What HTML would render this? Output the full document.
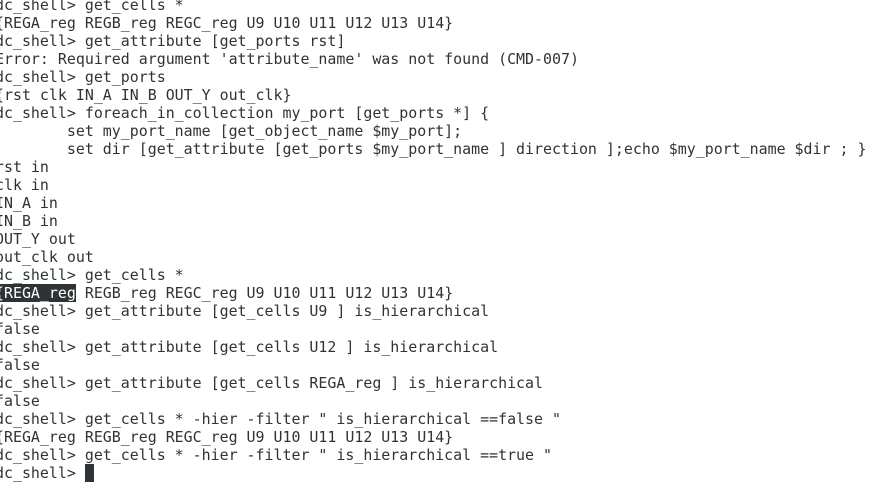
<!DOCTYPE html>
<html><head><style>
html,body{margin:0;padding:0;background:#fff;width:877px;height:476px;overflow:hidden}
pre{position:absolute;left:-5px;top:-4px;margin:0;font-family:"DejaVu Sans Mono","Liberation Mono",monospace;font-size:14.93px;line-height:18px;color:#2e3436;}
.h{background:#2e3436;color:#fff}
.c{background:#2e3436;color:#2e3436}
</style></head><body>
<pre>dc_shell&gt; get_cells *
{REGA_reg REGB_reg REGC_reg U9 U10 U11 U12 U13 U14}
dc_shell&gt; get_attribute [get_ports rst]
Error: Required argument 'attribute_name' was not found (CMD-007)
dc_shell&gt; get_ports
{rst clk IN_A IN_B OUT_Y out_clk}
dc_shell&gt; foreach_in_collection my_port [get_ports *] {
        set my_port_name [get_object_name $my_port];
        set dir [get_attribute [get_ports $my_port_name ] direction ];echo $my_port_name $dir ; }
rst in
clk in
IN_A in
IN_B in
OUT_Y out
out_clk out
dc_shell&gt; get_cells *
<span class="h">{REGA_reg</span> REGB_reg REGC_reg U9 U10 U11 U12 U13 U14}
dc_shell&gt; get_attribute [get_cells U9 ] is_hierarchical
false
dc_shell&gt; get_attribute [get_cells U12 ] is_hierarchical
false
dc_shell&gt; get_attribute [get_cells REGA_reg ] is_hierarchical
false
dc_shell&gt; get_cells * -hier -filter " is_hierarchical ==false "
{REGA_reg REGB_reg REGC_reg U9 U10 U11 U12 U13 U14}
dc_shell&gt; get_cells * -hier -filter " is_hierarchical ==true "
dc_shell&gt; <span class="c">_</span></pre>
</body></html>
